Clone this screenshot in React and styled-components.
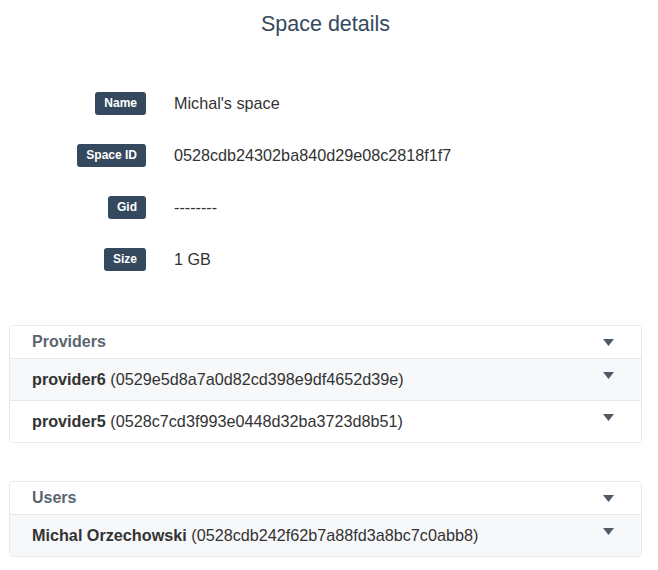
import { Fragment } from "react";
import styled, { createGlobalStyle } from "styled-components";

const GlobalStyle = createGlobalStyle`
  body {
    margin: 0;
    background: #fff;
    font-family: "Liberation Sans", Arial, sans-serif;
    color: #333;
  }
`;

const details = [
  { label: "Name", value: "Michal's space" },
  { label: "Space ID", value: "0528cdb24302ba840d29e08c2818f1f7" },
  { label: "Gid", value: "--------" },
  { label: "Size", value: "1 GB" },
];

const providers = [
  { name: "provider6", id: "0529e5d8a7a0d82cd398e9df4652d39e" },
  { name: "provider5", id: "0528c7cd3f993e0448d32ba3723d8b51" },
];

const users = [{ name: "Michal Orzechowski", id: "0528cdb242f62b7a88fd3a8bc7c0abb8" }];

const Page = styled.div`
  width: 658px;
  padding-bottom: 14px;
`;

const Title = styled.h1`
  margin: 0;
  height: 77px;
  padding: 12px 7px 0 0;
  box-sizing: border-box;
  text-align: center;
  font-size: 21.5px;
  font-weight: normal;
  color: #34495e;
`;

const DetailsGrid = styled.div`
  display: grid;
  grid-template-columns: 146px 1fr;
  grid-auto-rows: 52px;
  column-gap: 28px;
  align-items: center;
`;

const LabelCell = styled.div`
  display: flex;
  justify-content: flex-end;
`;

const Badge = styled.span`
  display: inline-flex;
  align-items: center;
  height: 23px;
  padding: 0 9px;
  border-radius: 3px;
  background: #34495e;
  color: #fff;
  font-size: 12px;
  font-weight: bold;
`;

const Value = styled.div`
  font-size: 16.2px;
  color: #333;
  padding-top: 1px;
`;

const Panel = styled.div`
  margin: ${(p) => p.$top}px 16px 0 9px;
  border: 1px solid #e7eaed;
  border-radius: 4px;
  overflow: hidden;
`;

const Row = styled.div`
  display: flex;
  align-items: ${(p) => (p.$head ? "center" : "flex-start")};
  height: ${(p) => (p.$head ? 32 : 41)}px;
  padding: 0 27px 0 22px;
  background: ${(p) => (p.$head || p.$alt ? "#fff" : "#f7f8fa")};
  border-top: ${(p) => (p.$head ? "none" : "1px solid #e7eaed")};
`;

const HeadText = styled.div`
  flex: 1;
  font-size: 16px;
  font-weight: bold;
  color: #5b6571;
`;

const RowText = styled.div`
  flex: 1;
  align-self: center;
  font-size: 16.2px;
  color: #333;
`;

const Caret = styled.svg`
  width: 11px;
  height: 7px;
  margin-top: ${(p) => (p.$head ? 1 : 13)}px;
  flex-shrink: 0;
`;

const Arrow = ({ head }) => (
  <Caret $head={head} viewBox="0 0 11 7">
    <path d="M0 0 H11 L5.5 7 Z" fill="#4e5a68" />
  </Caret>
);

const ListPanel = ({ title, items, top }) => (
  <Panel $top={top}>
    <Row $head>
      <HeadText>{title}</HeadText>
      <Arrow head />
    </Row>
    {items.map((item, i) => (
      <Row key={item.id} $alt={i % 2 === 1}>
        <RowText>
          <b>{item.name}</b> ({item.id})
        </RowText>
        <Arrow />
      </Row>
    ))}
  </Panel>
);

export default function App() {
  return (
    <Page>
      <GlobalStyle />
      <Title>Space details</Title>
      <DetailsGrid>
        {details.map((d) => (
          <Fragment key={d.label}>
            <LabelCell>
              <Badge>{d.label}</Badge>
            </LabelCell>
            <Value>{d.value}</Value>
          </Fragment>
        ))}
      </DetailsGrid>
      <ListPanel title="Providers" items={providers} top={40} />
      <ListPanel title="Users" items={users} top={38} />
    </Page>
  );
}
